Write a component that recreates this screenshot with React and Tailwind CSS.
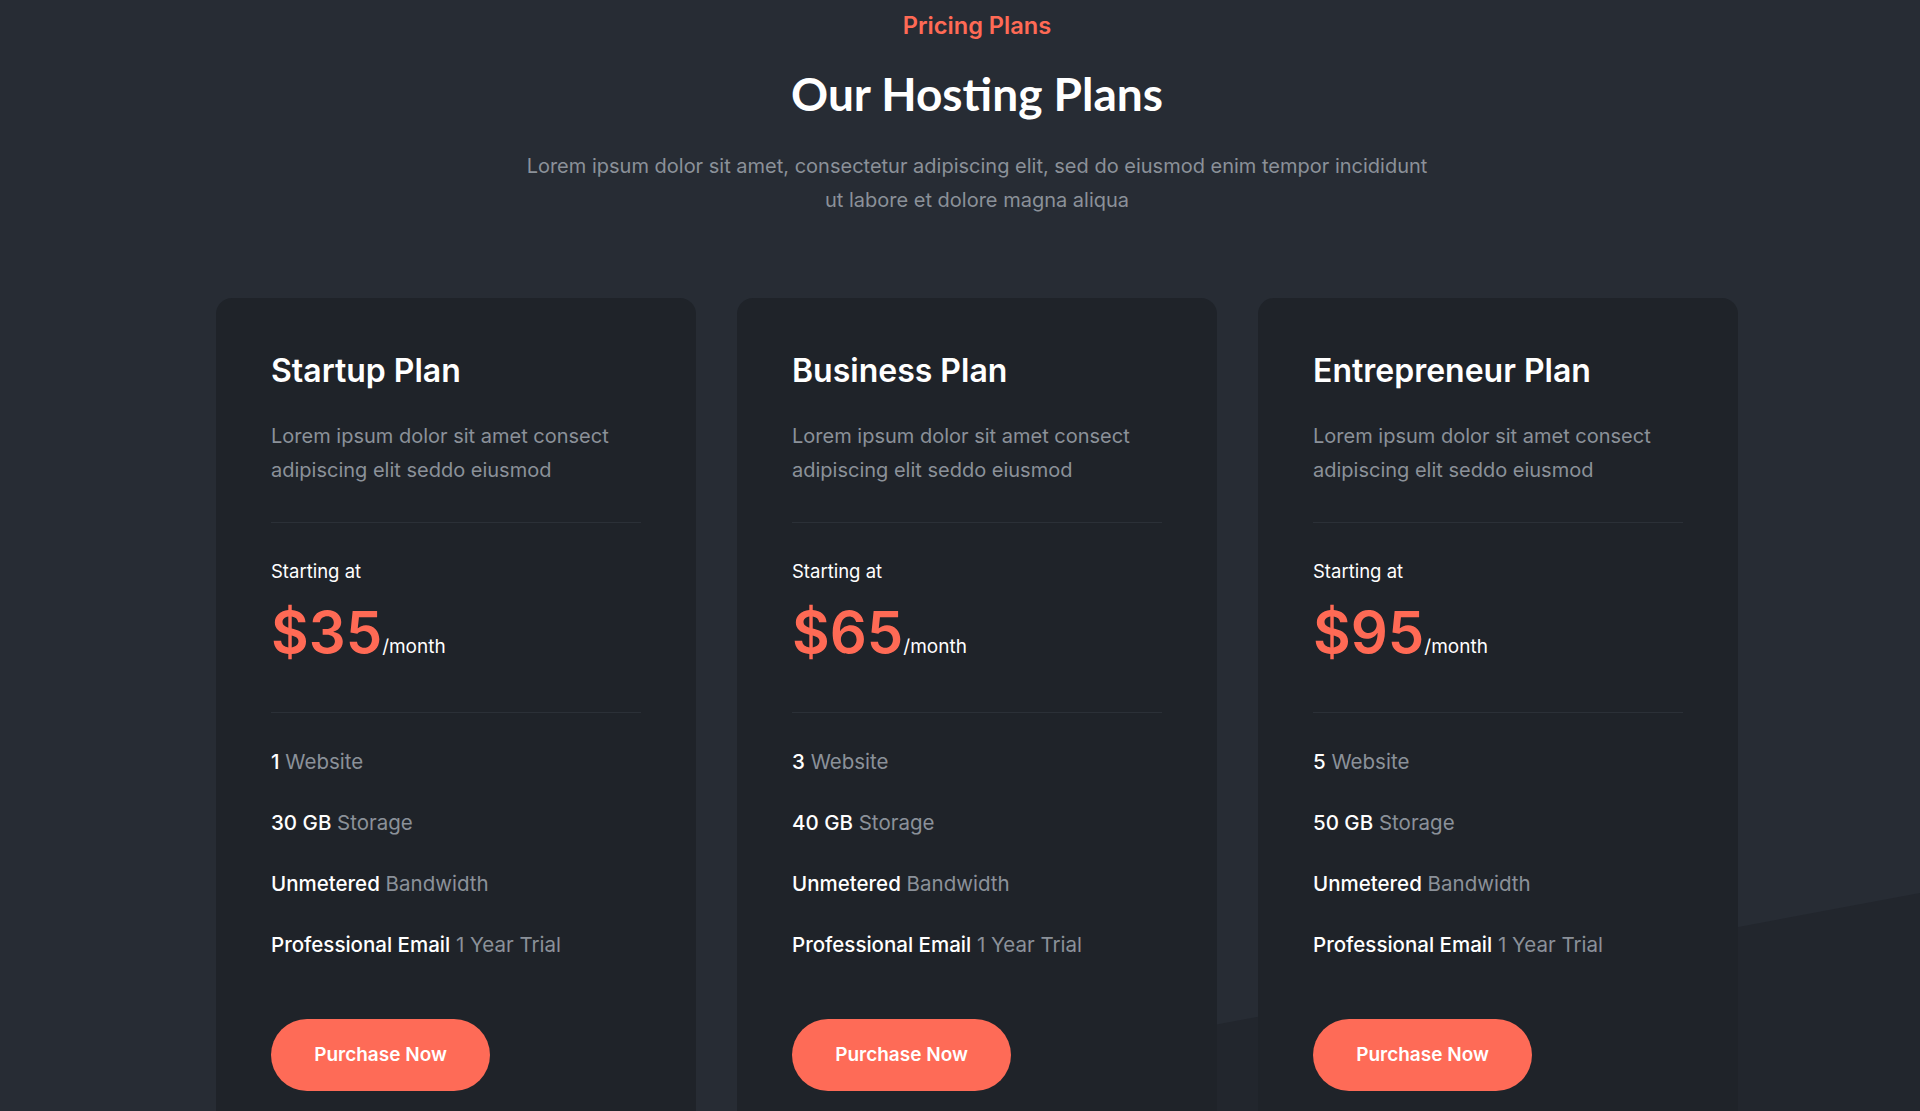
import React from 'react'

const plans = [
  { name: 'Startup Plan', price: '35', sites: '1', storage: '30 GB' },
  { name: 'Business Plan', price: '65', sites: '3', storage: '40 GB' },
  { name: 'Entrepreneur Plan', price: '95', sites: '5', storage: '50 GB' },
]

function Feature({ strong, rest }) {
  return (
    <li className="text-[20.5px] leading-[30px]">
      <span className="font-medium text-white">{strong}</span>{' '}
      <span className="text-[#8b9199]">{rest}</span>
    </li>
  )
}

function PlanCard({ plan }) {
  return (
    <div className="w-[480px] shrink-0 rounded-2xl bg-[#1f2329] px-[55px] pt-[54px] pb-[55px]">
      <h3 className="text-[32px] leading-[1.2] font-semibold text-white">{plan.name}</h3>
      <p className="mt-[28px] text-[20px] leading-[34px] text-[#8b9199]">
        Lorem ipsum dolor sit amet consect adipiscing elit seddo eiusmod
      </p>
      <div className="mt-[35px] h-px bg-[#2b3037]" />
      <p className="mt-[35px] text-[18.5px] leading-[27px] text-white">Starting at</p>
      <div className="mt-[18px] flex items-baseline">
        <span className="text-[58px] leading-none font-semibold text-[#ff6a55]">${plan.price}</span>
        <span className="text-[19px] text-white">/month</span>
      </div>
      <div className="mt-[51px] h-px bg-[#2b3037]" />
      <ul className="mt-[34px] flex flex-col gap-[31px]">
        <Feature strong={plan.sites} rest="Website" />
        <Feature strong={plan.storage} rest="Storage" />
        <Feature strong="Unmetered" rest="Bandwidth" />
        <Feature strong="Professional Email" rest="1 Year Trial" />
      </ul>
      <button className="mt-[59px] h-[72px] w-[219px] rounded-full bg-[#fe6b57] text-[19px] font-semibold text-white">
        Purchase Now
      </button>
    </div>
  )
}

export default function App() {
  return (
    <div className="relative h-[1111px] overflow-hidden bg-[#272c34] font-['Inter',sans-serif]">
      {/* darker diagonal band at the bottom */}
      <svg className="absolute inset-0 h-full w-full" viewBox="0 0 1920 1111" preserveAspectRatio="none">
        <polygon points="1920,893 1920,1111 0,1111 0,1252" fill="#22262d" />
      </svg>

      <div className="relative flex flex-col items-center pl-[34px]">
        <p className="mt-[11px] text-[23.6px] leading-[30px] font-semibold text-[#ff6a55]">Pricing Plans</p>
        <h2 className="mt-[25px] font-['Lato',sans-serif] text-[46px] leading-[1.2] font-bold text-white">Our Hosting Plans</h2>
        <p className="mt-[28px] max-w-[920px] text-center text-[20px] leading-[34px] text-[#8b9199]">
          Lorem ipsum dolor sit amet, consectetur adipiscing elit, sed do eiusmod enim tempor incididunt ut labore et dolore magna aliqua
        </p>

        <div className="mt-[81px] flex gap-[41px]">
          {plans.map((p) => (
            <PlanCard key={p.name} plan={p} />
          ))}
        </div>
      </div>
    </div>
  )
}
